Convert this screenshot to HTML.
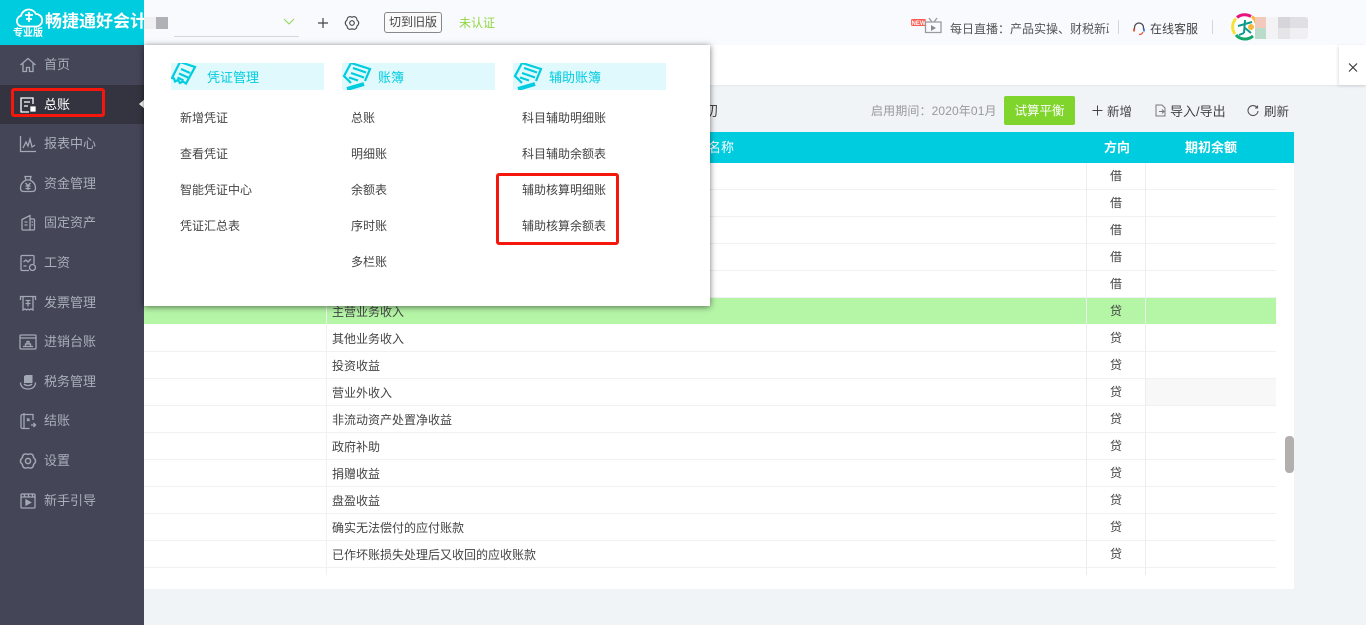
<!DOCTYPE html>
<html lang="zh"><head><meta charset="utf-8"><title>总账</title>
<style>
*{box-sizing:border-box}
html,body{margin:0;padding:0;width:1366px;height:625px;overflow:hidden;background:#f0f4f7;font-family:"Liberation Sans","Noto Sans CJK SC",sans-serif;color:#444;font-size:12px}
.a{position:absolute;white-space:nowrap}
.t{position:absolute;white-space:nowrap;line-height:18px;height:18px}
#top{left:0;top:0;width:1366px;height:45px;background:#f9fafe}
#tab{left:144px;top:45px;width:1222px;height:40px;background:#fff;box-shadow:0 1px 2px rgba(0,0,0,.05)}
#side{left:0;top:0;width:144px;height:625px;background:#444557}
#logo{left:0;top:0;width:144px;height:45px;background:#00ccdf;color:#fff}
.m{position:absolute;left:44px;font-size:13px;color:#a9afbb;line-height:18px;white-space:nowrap;margin-top:1px}
.ic{position:absolute;left:19px;width:18px;height:18px;fill:none;stroke:#a2a9b5;stroke-width:1.3;margin-top:1px}
.pop{position:absolute;left:144px;top:45px;width:566px;height:261px;background:#fff;box-shadow:0 1px 6px rgba(0,0,0,.55)}
.h{position:absolute;top:63px;width:153px;height:27px;background:#e0f9fc;color:#00ccdf;font-size:13px;line-height:30px;padding-left:36px}
.h svg{position:absolute;left:0;top:0}
.i{position:absolute;font-size:12px;color:#444;line-height:18px;white-space:nowrap;margin-top:1px}
.row{position:absolute;left:144px;width:1132px;height:27px;border-bottom:1px solid #f0f1f2}
.n{position:absolute;left:332px;font-size:12px;line-height:18px;color:#444;white-space:nowrap}
.d{position:absolute;left:1110px;font-size:12px;line-height:18px;color:#444}
.red{position:absolute;border:3px solid #f5160c;border-radius:3px}
</style></head><body>
<div class="a" id="top"></div>
<div class="a" id="tab"></div>
<div class="a" style="left:1339px;top:45px;width:27px;height:40px;background:#fff;box-shadow:-1px 1px 3px rgba(0,0,0,.12)"></div>
<svg class="a" style="left:1348px;top:62px" width="10" height="11" fill="none" stroke="#333" stroke-width="1.1"><path d="M1 1.500l8 8M9 1.500l-8 8"/></svg>

<!-- top bar -->
<div class="a" style="left:144px;top:17px;width:12px;height:12px;background:#f0f0f3"></div>
<div class="a" style="left:156px;top:17px;width:12px;height:12px;background:#b0b1b6"></div>
<div class="a" style="left:174px;top:36px;width:125px;height:1px;background:#d6d8d8"></div>
<svg class="a" style="left:282px;top:17px" width="14" height="10" fill="none" stroke="#8fd851" stroke-width="1"><path d="M2 2l5 5 5-5"/></svg>
<svg class="a" style="left:317px;top:17px" width="12" height="12" fill="none" stroke="#444" stroke-width="1.200"><path d="M1 6h10M6 1v10"/></svg>
<svg class="a" style="left:344px;top:15px" width="16" height="16" viewBox="0 0 16 16" fill="none" stroke="#444" stroke-width="1.100"><path d="M13 5Q16.500 8 13 11Q12.500 15.500 8 13.800Q3.500 15.500 3 11Q-.5 8 3 5Q3.500.5 8 2.200Q12.500.5 13 5z"/><circle cx="8" cy="8" r="2.300"/></svg>
<div class="a" style="left:384px;top:12px;width:58px;height:21px;border:1px solid #888;border-radius:3px;background:#fafafa;font-size:12px;line-height:19px;text-align:center;color:#444">切到旧版</div>
<div class="t" style="left:459px;top:14px;color:#8fd63f">未认证</div>

<svg class="a" style="left:910px;top:16px" width="32" height="18" viewBox="0 0 32 18"><rect x="1" y="3" width="15" height="7" rx="1.500" fill="#fb5a4f"/><text x="8.500" y="9" font-size="6" font-weight="bold" fill="#fff" text-anchor="middle" font-family="Liberation Sans,sans-serif">NEW</text><path d="M17 6h-1.500v10.500h15.500V6zM19 2l3 4M27 2l-3 4" fill="none" stroke="#9a9a9a" stroke-width="1.300"/><path d="M21 9l5 3-5 3z" fill="#8b8b8b"/></svg>
<div class="t" style="left:950px;top:20px;width:159px;overflow:hidden;color:#555">每日直播：产品实操、财税新政</div>
<div class="a" style="left:1118px;top:20px;width:1px;height:14px;background:#d6d6d6"></div>
<svg class="a" style="left:1132px;top:22px" width="14" height="14" viewBox="0 0 14 14" fill="none" stroke="#444" stroke-width="1.200"><path d="M2.500 8V5.500a4.500 4.500 0 0 1 9 0V8"/><path d="M2 6.500v3" stroke="#e4572e" stroke-width="1.800"/><path d="M12 6.500v3" stroke="#3a7bd5" stroke-width="1.800"/><path d="M11 10c-.5 1.500-2 2.500-4 2.500" stroke="#e4572e"/></svg>
<div class="t" style="left:1150px;top:20px;color:#444">在线客服</div>
<div class="a" style="left:1212px;top:20px;width:1px;height:14px;background:#d6d6d6"></div>
<svg class="a" style="left:1231px;top:13px" width="28" height="28" viewBox="0 0 28 28" fill="none"><circle cx="14" cy="14" r="13" fill="#fff"/><path d="M6 4.500A12 12 0 0 1 20 3.500" stroke="#e6137f" stroke-width="3"/><path d="M5 5.500A12 12 0 0 0 4 21" stroke="#f4e43a" stroke-width="3"/><path d="M5 22A12 12 0 0 0 22 23" stroke="#11a86a" stroke-width="3"/><path d="M21 3.500A12 12 0 0 1 25 10" stroke="#f6b73c" stroke-width="3"/><path d="M14 7l-1 13M7 13l7-2 7-2M13 20l-5 2M14 15l6 5" stroke="#0c9a8e" stroke-width="2"/><circle cx="20" cy="14" r="3" fill="#f6b73c"/></svg>
<div class="a" style="left:1255px;top:17px;width:11px;height:11px;background:#f2c9bb"></div>
<div class="a" style="left:1255px;top:28px;width:11px;height:11px;background:#b9dccb"></div>
<div class="a" style="left:1266px;top:17px;width:12px;height:22px;background:#f3f3f5"></div>
<div class="a" style="left:1278px;top:17px;width:12px;height:11px;background:#d6d6da"></div>
<div class="a" style="left:1278px;top:28px;width:12px;height:11px;background:#e5e5e8"></div>
<div class="a" style="left:1290px;top:17px;width:18px;height:11px;background:#e0e0e4;border-radius:0 3px 0 0"></div>
<div class="a" style="left:1290px;top:28px;width:18px;height:11px;background:#f0f0f2;border-radius:0 0 3px 0"></div>

<!-- toolbar -->
<div class="t" style="left:871px;top:102px;color:#999;letter-spacing:.12px">启用期间：2020年01月</div>
<div class="a" style="left:1004px;top:96px;width:71px;height:29px;background:#7fd52c;border-radius:2px;color:#fff;font-size:12.5px;line-height:30px;text-align:center">试算平衡</div>
<svg class="a" style="left:1092px;top:105px" width="11" height="11" fill="none" stroke="#444" stroke-width="1"><path d="M.5 5.500h10M5.500.5v10"/></svg>
<div class="t" style="left:1107px;top:103px;color:#444;font-size:12.5px">新增</div>
<svg class="a" style="left:1155px;top:104px" width="12" height="13" viewBox="0 0 12 13" fill="none" stroke="#777" stroke-width="1"><path d="M1 1h6l3 3v8H1zM4 7.500h5M7 5.500l2 2-2 2"/></svg>
<div class="t" style="left:1170px;top:103px;color:#444;font-size:13px">导入/导出</div>
<svg class="a" style="left:1247px;top:105px" width="12" height="12" viewBox="0 0 12 12" fill="none" stroke="#555" stroke-width="1.100"><path d="M10 2.500A5 5 0 1 0 11 6M10.500 .5v2.500H8"/></svg>
<div class="t" style="left:1264px;top:103px;color:#444;font-size:12.5px">刷新</div>

<!-- table -->
<div class="a" style="left:144px;top:132px;width:1150px;height:457px;background:#fff"></div>
<div class="a" style="left:144px;top:132px;width:1150px;height:31px;background:#00ccdf"></div>
<div class="a" style="left:708px;top:139px;color:#fff;font-size:13px;line-height:18px">名称</div>
<div class="a" style="left:1104px;top:139px;color:#fff;font-size:13px;font-weight:bold;line-height:18px">方向</div>
<div class="a" style="left:1185px;top:139px;color:#fff;font-size:13px;font-weight:bold;line-height:18px">期初余额</div>
<div class="t" style="left:704px;top:102px;color:#444;font-size:14px">初</div>

<div class="row" style="top:163px"></div><div class="row" style="top:190px"></div><div class="row" style="top:217px"></div><div class="row" style="top:244px"></div><div class="row" style="top:271px"></div>
<div class="row" style="top:298px;background:#b4f5a6;border-bottom:1px solid #fff"></div>
<div class="row" style="top:325px"></div><div class="row" style="top:352px"></div>
<div class="row" style="top:379px"></div>
<div class="a" style="left:1146px;top:379px;width:130px;height:26px;background:#f8f8f8"></div>
<div class="row" style="top:406px"></div><div class="row" style="top:433px"></div><div class="row" style="top:460px"></div><div class="row" style="top:487px"></div><div class="row" style="top:514px"></div><div class="row" style="top:541px"></div>
<div class="a" style="left:326px;top:163px;width:1px;height:412px;background:#f0f1f2"></div>
<div class="a" style="left:1086px;top:163px;width:1px;height:412px;background:#eceded"></div>
<div class="a" style="left:1145px;top:163px;width:1px;height:412px;background:#eceded"></div>

<div class="d" style="top:167px">借</div><div class="d" style="top:194px">借</div><div class="d" style="top:221px">借</div><div class="d" style="top:248px">借</div><div class="d" style="top:275px">借</div>
<div class="d" style="top:302px">贷</div><div class="d" style="top:329px">贷</div><div class="d" style="top:356px">贷</div><div class="d" style="top:383px">贷</div><div class="d" style="top:410px">贷</div><div class="d" style="top:437px">贷</div><div class="d" style="top:464px">贷</div><div class="d" style="top:491px">贷</div><div class="d" style="top:518px">贷</div><div class="d" style="top:545px">贷</div>

<div class="n" style="top:303px">主营业务收入</div>
<div class="n" style="top:330px">其他业务收入</div>
<div class="n" style="top:357px">投资收益</div>
<div class="n" style="top:384px">营业外收入</div>
<div class="n" style="top:411px">非流动资产处置净收益</div>
<div class="n" style="top:438px">政府补助</div>
<div class="n" style="top:465px">捐赠收益</div>
<div class="n" style="top:492px">盘盈收益</div>
<div class="n" style="top:519px">确实无法偿付的应付账款</div>
<div class="n" style="top:546px">已作坏账损失处理后又收回的应收账款</div>
<div class="a" style="left:1285px;top:436px;width:9px;height:37px;background:#b3afaf;border-radius:4px"></div>

<!-- sidebar -->
<div class="a" id="side"></div>
<div class="a" id="logo">
<svg class="a" style="left:14px;top:7px" width="30" height="21" viewBox="0 0 30 21" fill="none" stroke="#fff" stroke-width="1.800"><path d="M8 19.500a5.500 5.500 0 0 1-1-10.800A8 8 0 0 1 22 7a6.300 6.300 0 0 1 1 12.500z"/><path d="M11 8h8M12 12h6M15 5v10"/></svg>
<div class="a" style="left:45px;top:12px;font-size:17px;font-weight:bold;line-height:20px;width:99px;overflow:hidden">畅捷通好会计</div>
<div class="a" style="left:13px;top:27px;font-size:10px;font-weight:bold;line-height:13px">专业版</div>
</div>
<div class="a" style="left:0;top:85px;width:144px;height:39px;background:#33343f"></div>
<div class="a" style="left:139px;top:99px;width:0;height:0;border-top:5px solid transparent;border-bottom:5px solid transparent;border-right:6px solid #fff"></div>

<svg class="ic" style="top:55px" viewBox="0 0 18 18"><path d="M1.500 9L9 2.500 16.500 9M4 7.500V15.500h3.500v-4h3v4H14V7.500"/></svg>
<div class="m" style="top:55px">首页</div>
<svg class="ic" style="top:95px;stroke:#fff" viewBox="0 0 18 18"><path d="M14 8V2H2v14h8M5 6h6M5 10h4"/><path d="M12 11h4v4h-4z" fill="#fff"/></svg>
<div class="m" style="top:95px;color:#fff">总账</div>
<svg class="ic" style="top:134px" viewBox="0 0 18 18"><path d="M1.500 1v15.500H17M4 13l3-6 2 4 2-7 2 8 3-2"/></svg>
<div class="m" style="top:134px">报表中心</div>
<svg class="ic" style="top:174px" viewBox="0 0 18 18"><path d="M6 1.500h6l-1 3.500H7zM7 5C3 7 1.500 10 1.500 13c0 2 1 3.500 3 3.500h9c2 0 3-1.500 3-3.500 0-3-1.500-6-5.500-8M6.500 8L9 10.500 11.500 8M6.500 11h5M6.500 13.500h5M9 10.500V15"/></svg>
<div class="m" style="top:174px">资金管理</div>
<svg class="ic" style="top:213px" viewBox="0 0 18 18"><path d="M3 5.500L11 1.500V16H4a1 1 0 0 1-1-1zM11 5h3.500a1 1 0 0 1 1 1v9a1 1 0 0 1-1 1H11M5.500 8h3M5.500 11h3M12.500 8h1.500M12.500 11h1.500"/></svg>
<div class="m" style="top:213px">固定资产</div>
<svg class="ic" style="top:253px" viewBox="0 0 18 18"><path d="M10 16.500H3a1 1 0 0 1-1-1V2.500a1 1 0 0 1 1-1h11a1 1 0 0 1 1 1V10M4.500 8l2.500-2 2 2 3-3M4.500 12h3"/><circle cx="13.500" cy="13.500" r="3"/></svg>
<div class="m" style="top:253px">工资</div>
<svg class="ic" style="top:293px" viewBox="0 0 18 18"><path d="M1.500 6V2.500h15V6M4 3v13l2-1 1.500 1L9 15l1.500 1 1.500-1 2 1V3M6.500 6.500h5M6.500 9.500h5M9 6.500v6"/></svg>
<div class="m" style="top:293px">发票管理</div>
<svg class="ic" style="top:332px" viewBox="0 0 18 18"><rect x="1" y="2" width="16" height="14" rx="1"/><path d="M1 5h16M4 13.500h10M6.500 13.500V11h5v2.500M8 11V8.500h2V11"/></svg>
<div class="m" style="top:332px">进销台账</div>
<svg class="ic" style="top:372px" viewBox="0 0 18 18"><path d="M1.500 9.500c0 4 3 6.500 7.500 6.500s7.500-2.500 7.500-6.500M5 11c1 1 2.500 1.500 4 1.500s3-.5 4-1.500" /><path d="M5 10V3l2-1h6.500v8z" fill="#a2a9b5" stroke="none"/></svg>
<div class="m" style="top:372px">税务管理</div>
<svg class="ic" style="top:411px" viewBox="0 0 18 18"><path d="M14 8V2.500H3.500a1.500 1.500 0 0 0-1.500 1.500v11a1.500 1.500 0 0 0 1.500 1.500h7M5 1v15M12 13h4.500M14.500 11l2 2-2 2"/><path d="M8 6.500l2.500 2.500M10.500 6.500L8 9"/></svg>
<div class="m" style="top:411px">结账</div>
<svg class="ic" style="top:451px" viewBox="0 0 16 16"><path d="M13 5Q16.500 8 13 11Q12.500 15.500 8 13.800Q3.500 15.500 3 11Q-.5 8 3 5Q3.500.5 8 2.200Q12.500.5 13 5z"/><circle cx="8" cy="8" r="2.300"/></svg>
<div class="m" style="top:451px">设置</div>
<svg class="ic" style="top:491px" viewBox="0 0 18 18"><rect x="2" y="2" width="14" height="14" rx="1"/><path d="M2 5h14M5 2l1 3M9 2l1 3M13 2l1 3"/><path d="M7 8l4.500 2.500L7 13z" fill="#a2a9b5"/></svg>
<div class="m" style="top:491px">新手引导</div>

<!-- popup -->
<div class="pop"></div>
<div class="h" style="left:171px"><svg width="30" height="27" viewBox="0 0 30 27" fill="none" stroke="#00ccdf" stroke-width="2.200"><path d="M9 -1L1 15l2 .5 1 3 3-1.500 2 3 3-1.500 3 2L24 4z"/><path d="M10 6l9 4M8 10.500l9 4M6.500 14.500l6 3"/></svg>凭证管理</div>
<div class="h" style="left:342px"><svg width="32" height="27" viewBox="0 0 32 27" fill="none" stroke="#00ccdf" stroke-width="2.200"><path d="M9 0L2 13l7 7M9 0l19 6-5 12"/><path d="M11 5l13 4.500M9 10l13 4.500M7 14.500l9 3"/><path d="M5 26l17-5" stroke-width="4"/></svg>账簿</div>
<div class="h" style="left:513px"><svg width="32" height="27" viewBox="0 0 32 27" fill="none" stroke="#00ccdf" stroke-width="2.200"><path d="M9 0L2 13l7 7M9 0l19 6-5 12"/><path d="M11 5l13 4.500M9 10l13 4.500M7 14.500l9 3"/><path d="M5 26l17-5" stroke-width="4"/></svg>辅助账簿</div>

<div class="i" style="left:180px;top:108px">新增凭证</div>
<div class="i" style="left:180px;top:144px">查看凭证</div>
<div class="i" style="left:180px;top:180px">智能凭证中心</div>
<div class="i" style="left:180px;top:216px">凭证汇总表</div>
<div class="i" style="left:351px;top:108px">总账</div>
<div class="i" style="left:351px;top:144px">明细账</div>
<div class="i" style="left:351px;top:180px">余额表</div>
<div class="i" style="left:351px;top:216px">序时账</div>
<div class="i" style="left:351px;top:252px">多栏账</div>
<div class="i" style="left:522px;top:108px">科目辅助明细账</div>
<div class="i" style="left:522px;top:144px">科目辅助余额表</div>
<div class="i" style="left:522px;top:180px">辅助核算明细账</div>
<div class="i" style="left:522px;top:216px">辅助核算余额表</div>

<!-- annotations -->
<div class="red" style="left:11px;top:88px;width:94px;height:29px"></div>
<div class="red" style="left:496px;top:173px;width:123px;height:72px"></div>
</body></html>
